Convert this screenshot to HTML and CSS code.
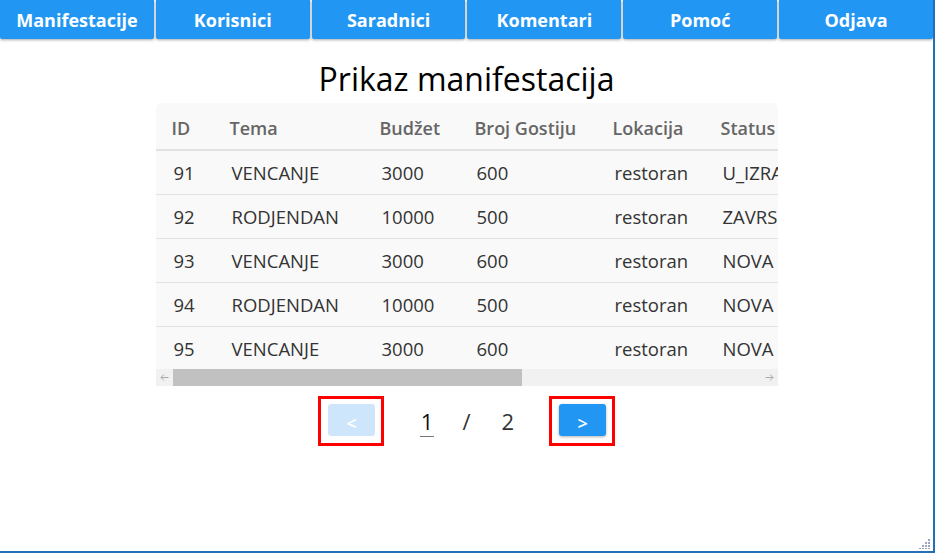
FILE: index.html
```html
<!DOCTYPE html>
<html lang="sr">
<head>
<meta charset="utf-8">
<title>Prikaz manifestacija</title>
<link rel="stylesheet" href="styles.css">
</head>
<body>
<div class="frame">
  <nav class="nav">
    <a class="nav-btn">Manifestacije</a>
    <a class="nav-btn">Korisnici</a>
    <a class="nav-btn">Saradnici</a>
    <a class="nav-btn">Komentari</a>
    <a class="nav-btn">Pomoć</a>
    <a class="nav-btn">Odjava</a>
  </nav>
  <main class="content">
    <h1 class="title">Prikaz manifestacija</h1>
    <div class="table-box">
      <div class="table-wrap">
        <table class="table">
          <colgroup>
            <col class="c-id"><col class="c-tema"><col class="c-budzet"><col class="c-broj"><col class="c-lok"><col class="c-status">
          </colgroup>
          <thead>
            <tr><th>ID</th><th>Tema</th><th>Budžet</th><th>Broj Gostiju</th><th>Lokacija</th><th>Status</th></tr>
          </thead>
          <tbody>
            <tr><td>91</td><td>VENCANJE</td><td>3000</td><td>600</td><td>restoran</td><td>U_IZRADI</td></tr>
            <tr><td>92</td><td>RODJENDAN</td><td>10000</td><td>500</td><td>restoran</td><td>ZAVRSENA</td></tr>
            <tr><td>93</td><td>VENCANJE</td><td>3000</td><td>600</td><td>restoran</td><td>NOVA</td></tr>
            <tr><td>94</td><td>RODJENDAN</td><td>10000</td><td>500</td><td>restoran</td><td>NOVA</td></tr>
            <tr><td>95</td><td>VENCANJE</td><td>3000</td><td>600</td><td>restoran</td><td>NOVA</td></tr>
          </tbody>
        </table>
      </div>
      <div class="hscroll">
        <span class="hs-btn">
          <svg width="9" height="7" viewBox="0 0 9 7"><path d="M8.5 3.5H1M4 0.5L1 3.5L4 6.5" fill="none" stroke="#a8a8a8" stroke-width="1"/></svg>
        </span>
        <span class="hs-track"><span class="hs-thumb"></span></span>
        <span class="hs-btn">
          <svg width="9" height="7" viewBox="0 0 9 7"><path d="M0.5 3.5H8M5 0.5L8 3.5L5 6.5" fill="none" stroke="#a8a8a8" stroke-width="1"/></svg>
        </span>
      </div>
    </div>
    <div class="pager">
      <div class="pager-box"><button class="pg-btn pg-disabled">&lt;</button></div>
      <span class="pg-cur">1</span>
      <span class="pg-sep">/</span>
      <span class="pg-total">2</span>
      <div class="pager-box"><button class="pg-btn">&gt;</button></div>
    </div>
  </main>
  <svg class="grip" width="12" height="12" viewBox="0 0 12 12">
    <g fill="#9aa6bf">
      <rect x="10" y="2" width="2" height="2"/>
      <rect x="7" y="5" width="2" height="2"/><rect x="10" y="5" width="2" height="2"/>
      <rect x="4" y="8" width="2" height="2"/><rect x="7" y="8" width="2" height="2"/><rect x="10" y="8" width="2" height="2"/>
      <rect x="1" y="11" width="2" height="1"/><rect x="4" y="11" width="2" height="1"/><rect x="7" y="11" width="2" height="1"/><rect x="10" y="11" width="2" height="1"/>
    </g>
  </svg>
</div>
</body>
</html>
```

FILE: styles.css
```css
* { box-sizing: border-box; }
html, body { margin: 0; padding: 0; background: #fff; }
body { font-family: "Open Sans", "Noto Sans", sans-serif; }

.frame {
  position: relative;
  width: 935px;
  height: 553px;
  border-right: 2px solid #2470b6;
  border-bottom: 2px solid #2470b6;
  overflow: hidden;
}

.nav {
  display: flex;
  gap: 2px;
  height: 39px;
}
.nav-btn {
  flex: 1;
  display: flex;
  align-items: center;
  justify-content: center;
  background: #2196f3;
  color: #fff;
  font-weight: 700;
  font-size: 18px;
  border-radius: 0 0 2px 2px;
  box-shadow: 0 1px 3px rgba(0,0,0,0.35);
}

.content {
  display: flex;
  flex-direction: column;
  align-items: center;
}
.title {
  margin: 16px 0 0;
  font-weight: 400;
  font-size: 32px;
  line-height: 48px;
  color: #000;
}

.table-box {
  width: 622px;
}
.table-wrap {
  width: 622px;
  overflow: hidden;
  background: #f9f9f9;
  border-radius: 6px 6px 0 0;
}

.table {
  width: 760px;
  border-collapse: collapse;
  table-layout: fixed;
  font-size: 18.5px;
}
.c-id { width: 58px; }
.c-tema { width: 150px; }
.c-budzet { width: 95px; }
.c-broj { width: 138px; }
.c-lok { width: 108px; }
.c-status { width: 211px; }
.table th {
  text-align: left;
  font-weight: 600;
  font-size: 18px;
  color: #666;
  height: 47px;
  padding: 3px 0 0 16px;
  border-bottom: 2px solid #e2e2e2;
  white-space: nowrap;
}
.table td {
  color: #333;
  height: 44px;
  padding: 1px 0 0 18px;
  border-bottom: 1px solid #e2e2e2;
  white-space: nowrap;
}
.table tbody tr:last-child td { border-bottom: none; height: 43px; }

.hscroll {
  display: flex;
  height: 17px;
  background: #f1f1f1;
}
.hs-btn {
  width: 17px;
  display: flex;
  align-items: center;
  justify-content: center;
}
.hs-track {
  flex: 1;
  display: flex;
}
.hs-thumb {
  width: 349px;
  background: #c1c1c1;
}

.pager {
  display: flex;
  align-items: center;
  margin-top: 10px;
  font-size: 22px;
  color: #333;
}
.pager-box {
  border: 3px solid #f00;
  padding: 5px 6px 7px 7px;
}
.pg-btn {
  display: block;
  width: 47px;
  height: 32px;
  border: none;
  border-radius: 3px;
  background: #2196f3;
  color: #fff;
  font-family: "Open Sans", sans-serif;
  font-size: 18px;
  font-weight: 600;
  padding: 6px 0 0;
  box-shadow: 0 1px 3px rgba(0,0,0,0.3);
}
.pg-disabled {
  background: #cde6fc;
  box-shadow: none;
}
.pg-cur {
  margin-left: 36px;
  padding: 0 1px;
  border-bottom: 1px solid #777;
  line-height: 30px;
  color: #111;
}
.pg-sep { margin-left: 28px; }
.pg-total { margin-left: 31px; margin-right: 35px; }

.grip {
  position: absolute;
  right: 3px;
  bottom: 2px;
}
```
